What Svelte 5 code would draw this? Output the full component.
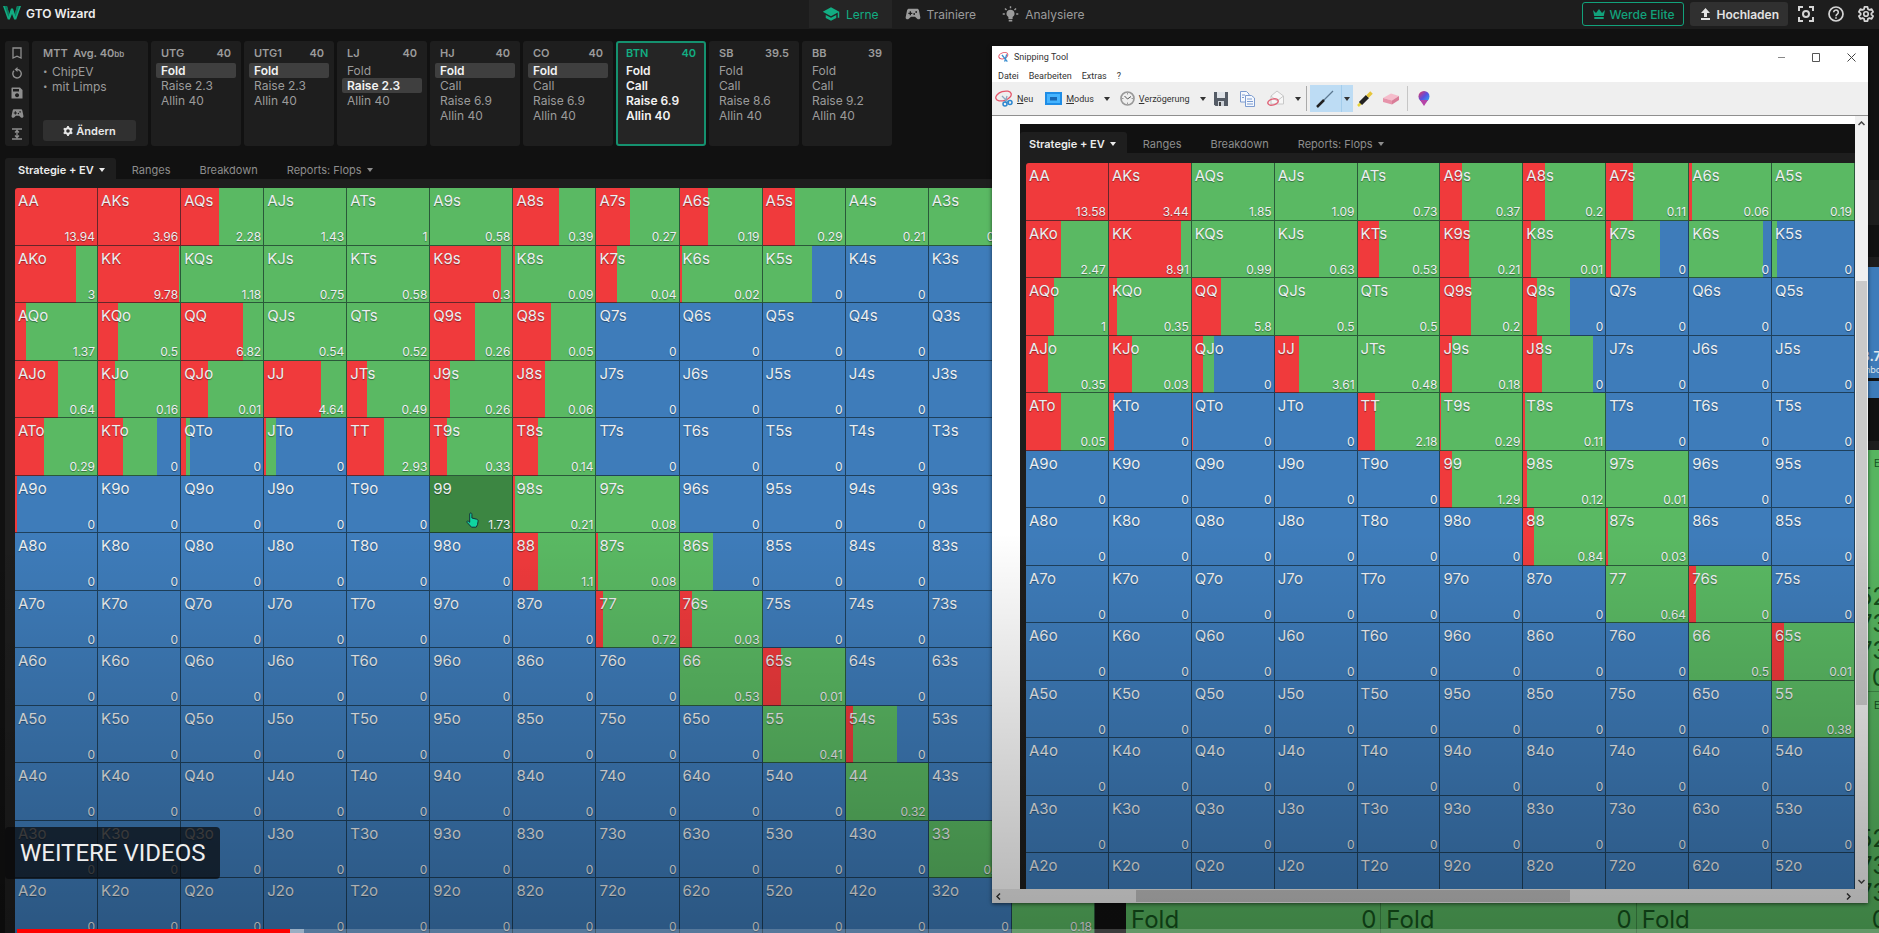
<script>
  const ranks = ['A', 'K', 'Q', 'J', 'T', '9', '8', '7', '6', '5', '4', '3', '2'];

  // hand: [red end %, green end %, EV]
  const mainHands = {
    AA: [100, 100, '13.94'], AKs: [100, 100, '3.96'], AQs: [46, 100, '2.28'], AJs: [0, 100, '1.43'], ATs: [0, 100, '1'],
    A9s: [0, 100, '0.58'], A8s: [55, 100, '0.39'], A7s: [41, 100, '0.27'], A6s: [34, 100, '0.19'], A5s: [39, 100, '0.29'],
    A4s: [0, 100, '0.21'], A3s: [0, 100, '0.18'], A2s: [0, 100, '0.17'],
    AKo: [74, 100, '3'], KK: [98, 100, '9.78'], KQs: [0, 100, '1.18'], KJs: [0, 100, '0.75'], KTs: [0, 100, '0.58'],
    K9s: [86, 100, '0.3'], K8s: [3, 100, '0.09'], K7s: [25, 100, '0.04'], K6s: [3, 100, '0.02'], K5s: [0, 59, '0'],
    AQo: [13, 100, '1.37'], KQo: [24, 100, '0.5'], QQ: [75, 100, '6.82'], QJs: [0, 100, '0.54'], QTs: [0, 100, '0.52'],
    Q9s: [54, 100, '0.26'], Q8s: [46, 100, '0.05'],
    AJo: [52, 100, '0.64'], KJo: [21, 100, '0.16'], QJo: [32, 100, '0.01'], JJ: [69, 100, '4.64'], JTs: [24, 100, '0.49'],
    J9s: [24, 100, '0.26'], J8s: [39, 100, '0.06'],
    ATo: [35, 100, '0.29'], KTo: [30, 71, '0'], QTo: [6, 11, '0'], JTo: [2, 14, '0'], TT: [44, 100, '2.93'],
    T9s: [20, 100, '0.33'], T8s: [30, 100, '0.14'],
    A9o: [3, 3, '0'], '99': [0, 100, '1.73'], '98s': [2, 100, '0.21'], '97s': [0, 100, '0.08'],
    '88': [30, 100, '1.1'], '87s': [2, 100, '0.08'], '86s': [0, 40, '0'],
    '77': [8, 100, '0.72'], '76s': [14, 100, '0.03'],
    '66': [0, 100, '0.53'], '65s': [22, 100, '0.01'],
    '55': [0, 100, '0.41'], '54s': [8, 61, '0'],
    '44': [0, 100, '0.32'], '33': [0, 100, '0.25'], '22': [0, 100, '0.18']
  };

  const snipHands = {
    AA: [100, 100, '13.58'], AKs: [99, 100, '3.44'], AQs: [0, 100, '1.85'], AJs: [0, 100, '1.09'], ATs: [0, 100, '0.73'],
    A9s: [27, 100, '0.37'], A8s: [27, 100, '0.2'], A7s: [33, 100, '0.11'], A6s: [4, 100, '0.06'], A5s: [0, 100, '0.19'],
    AKo: [42, 100, '2.47'], KK: [87, 100, '8.91'], KQs: [0, 100, '0.99'], KJs: [0, 100, '0.63'], KTs: [26, 100, '0.53'],
    K9s: [35, 100, '0.21'], K8s: [10, 100, '0.01'], K7s: [6, 65, '0'], K6s: [0, 89, '0'], K5s: [0, 6, '0'],
    AQo: [34, 100, '1'], KQo: [10, 100, '0.35'], QQ: [35, 100, '5.8'], QJs: [0, 100, '0.5'], QTs: [0, 100, '0.5'],
    Q9s: [37, 100, '0.2'], Q8s: [17, 57, '0'],
    AJo: [26, 100, '0.35'], KJo: [28, 100, '0.03'], QJo: [13, 26, '0'], JJ: [29, 100, '3.61'], JTs: [0, 100, '0.48'],
    J9s: [14, 100, '0.18'], J8s: [23, 84, '0'],
    ATo: [42, 100, '0.05'], KTo: [6, 6, '0'], QTo: [1, 1, '0'], TT: [21, 100, '2.18'], T9s: [1, 100, '0.29'], T8s: [2, 100, '0.11'],
    '99': [15, 100, '1.29'], '98s': [5, 100, '0.12'], '97s': [0, 100, '0.01'],
    '88': [13, 100, '0.84'], '87s': [3, 100, '0.03'],
    '77': [0, 100, '0.64'], '76s': [8, 100, '0'],
    '66': [0, 100, '0.5'], '65s': [15, 100, '0.01'],
    '55': [0, 100, '0.38']
  };

  function hand(i, j) {
    if (i === j) return ranks[i] + ranks[i];
    return j > i ? ranks[i] + ranks[j] + 's' : ranks[j] + ranks[i] + 'o';
  }

  function matrix(hands, cols) {
    return ranks.map((_, i) =>
      ranks.slice(0, cols).map((_, j) => {
        const name = hand(i, j);
        const [r, g, ev] = hands[name] ?? [0, 0, '0'];
        return { name, r, g, ev };
      })
    );
  }

  const mainRows = matrix(mainHands, 13);
  const snipRows = matrix(snipHands, 10);

  const seats = [
    { pos: 'UTG', stack: '40', actions: ['Fold', 'Raise 2.3', 'Allin 40'], picked: 0 },
    { pos: 'UTG1', stack: '40', actions: ['Fold', 'Raise 2.3', 'Allin 40'], picked: 0 },
    { pos: 'LJ', stack: '40', actions: ['Fold', 'Raise 2.3', 'Allin 40'], picked: 1 },
    { pos: 'HJ', stack: '40', actions: ['Fold', 'Call', 'Raise 6.9', 'Allin 40'], picked: 0 },
    { pos: 'CO', stack: '40', actions: ['Fold', 'Call', 'Raise 6.9', 'Allin 40'], picked: 0 },
    { pos: 'BTN', stack: '40', actions: ['Fold', 'Call', 'Raise 6.9', 'Allin 40'], picked: -1, active: true },
    { pos: 'SB', stack: '39.5', actions: ['Fold', 'Call', 'Raise 8.6', 'Allin 40'], picked: -1 },
    { pos: 'BB', stack: '39', actions: ['Fold', 'Call', 'Raise 9.2', 'Allin 40'], picked: -1 }
  ];

  const fill = (c) =>
    `linear-gradient(90deg, #f03a3c ${c.r}%, #5ab963 ${c.r}%, #5ab963 ${c.g}%, #3e7cba ${c.g}%)`;
</script>

{#snippet gamepad(size)}
  <svg width={size} height={size} viewBox="0 0 24 24" aria-hidden="true">
    <path fill="currentColor" fill-rule="evenodd" d="M6 4h12c1.500 0 2.600 1 2.900 2.400L23 16.800c.4 2.800-2.800 4.300-4.700 2.400L15 16H9l-3.300 3.200C3.800 21.100.6 19.600 1 16.800L3.100 6.400C3.400 5 4.500 4 6 4zm1 4v2H5v2h2v2h2v-2h2v-2H9V8zm8 4a1.300 1.300 0 1 0 0 .1zm3-3a1.300 1.300 0 1 0 0 .1z" />
  </svg>
{/snippet}

{#snippet tabs()}
  <nav class="tabs">
    <button class="tab on">Strategie + EV <i class="caret"></i></button>
    <button class="tab">Ranges</button>
    <button class="tab">Breakdown</button>
    <button class="tab">Reports: Flops <i class="caret"></i></button>
  </nav>
{/snippet}

{#snippet chart(rows, hover)}
  <table class="chart">
    <tbody>
      {#each rows as row}
        <tr>
          {#each row as c}
            <td class:hover={c.name === hover} style:background-image={c.name === hover ? null : fill(c)}>
              <span class="name">{c.name}</span>
              <span class="ev">{c.ev}</span>
              {#if c.name === hover}
                <svg class="pointer" width="13" height="16" viewBox="0 0 13 16" aria-hidden="true">
                  <path d="M4 1.200c1-.5 1.800 0 1.900 1V6l4.700 1.200c1.200.3 1.600 1 1.500 2l-.6 3.500-1.300 2.500H5.500L1 10.300c-.5-1 .6-1.700 1.500-1l1.200 1V2z" fill="#10d5a0" stroke="#17323a" />
                </svg>
              {/if}
            </td>
          {/each}
        </tr>
      {/each}
    </tbody>
  </table>
{/snippet}

<div class="app">
  <header class="top">
    <a class="brand" href="#home">
      <svg width="18" height="14" viewBox="0 0 18 14" aria-hidden="true">
        <path d="M0 0h4l2.200 8L8 2.500h2L11.800 8 14 0h4l-4.800 13.500h-2L9 8l-2.200 5.500h-2z" fill="#12ad82" />
        <path d="M4 0l2.200 8L5.500 11 1.500 0zM14 0l-2.200 8 .6 3L16.500 0z" fill="#0b7d60" />
      </svg>
      GTO Wizard
    </a>
    <nav class="modes">
      <a class="mode on" href="#lerne">
        <svg width="18" height="18" viewBox="0 0 24 24" aria-hidden="true"><path fill="currentColor" d="M5 13.200v4L12 21l7-3.800v-4L12 17zM12 3L1 9l11 6 9-4.900V17h2V9z" /></svg>
        Lerne
      </a>
      <a class="mode" href="#trainiere">{@render gamepad(16)} Trainiere</a>
      <a class="mode" href="#analysiere">
        <svg width="17" height="18" viewBox="0 0 24 24" aria-hidden="true">
          <path fill="currentColor" d="M12 6a5.500 5.500 0 0 0-3 10.200V19h6v-2.800A5.500 5.500 0 0 0 12 6zM9.500 20h5v2.500h-5z" />
          <path stroke="currentColor" stroke-width="2" d="M12 1v3M1 12h3M20 12h3M4.200 4.200l2.200 2.200M19.800 4.200l-2.200 2.200" />
        </svg>
        Analysiere
      </a>
    </nav>
    <div class="tools">
      <button class="elite">
        <svg width="12" height="10" viewBox="0 0 12 10" aria-hidden="true"><path fill="currentColor" d="M0 1l3 3 3-4 3 4 3-3-1.200 6H1.200zM1.300 8h9.400v2H1.300z" /></svg>
        Werde Elite
      </button>
      <button class="upload">
        <svg width="11" height="12" viewBox="0 0 11 12" aria-hidden="true"><path fill="currentColor" d="M5.500 0L10 5H7v4H4V5H1zM1 10h9v2H1z" /></svg>
        Hochladen
      </button>
      <button class="icon" aria-label="Vollbild">
        <svg width="16" height="16" viewBox="0 0 16 16" fill="none" stroke="currentColor" stroke-width="2" aria-hidden="true"><path d="M1 5V1h4M11 1h4v4M15 11v4h-4M5 15H1v-4" /><circle cx="8" cy="8" r="3" /></svg>
      </button>
      <button class="icon" aria-label="Hilfe">
        <svg width="16" height="16" viewBox="0 0 16 16" fill="none" stroke="currentColor" aria-hidden="true"><circle cx="8" cy="8" r="7" stroke-width="1.700" /><path stroke-width="1.600" d="M5.700 6.300a2.300 2.300 0 1 1 3.600 1.900C8.400 8.900 8 9.200 8 10.200M8 11.200v1.500" /></svg>
      </button>
      <button class="icon" aria-label="Einstellungen">
        <svg width="18" height="18" viewBox="0 0 24 24" aria-hidden="true"><path fill="none" stroke="currentColor" stroke-width="2.400" stroke-linejoin="round" d="M10 2.500h4l.6 3 2 1.100 2.900-1 2 3.500-2.300 2v1.800l2.300 2-2 3.500-2.900-1-2 1.100-.6 3h-4l-.6-3-2-1.100-2.900 1-2-3.500 2.300-2v-1.800l-2.300-2 2-3.500 2.900 1 2-1.100z" /><circle cx="12" cy="12" r="3" fill="none" stroke="currentColor" stroke-width="2.200" /></svg>
      </button>
    </div>
  </header>

  <section class="seats">
    <div class="rail">
      <button aria-label="Lesezeichen"><svg width="12" height="12" viewBox="0 0 12 12" fill="none" stroke="currentColor" stroke-width="1.300"><path d="M2 1h8v10L6 9.200 2 11z" /></svg></button>
      <button aria-label="Zurücksetzen"><svg width="12" height="12" viewBox="0 0 12 12" fill="none" stroke="currentColor" stroke-width="1.400"><path d="M3 3.800a4.200 4.200 0 1 0 3-1.300H5" /><path d="M6.500 0v5L3.500 2.500z" fill="currentColor" stroke="none" /></svg></button>
      <button aria-label="Speichern"><svg width="12" height="12" viewBox="0 0 12 12"><path fill="currentColor" fill-rule="evenodd" d="M1 .5h8L11.500 3v8.500H.5V1zM2 2v2.500h6V2zM6 6.200a2 2 0 1 0 .1 0z" /></svg></button>
      <button aria-label="Training">{@render gamepad(13)}</button>
      <button aria-label="Höhe"><svg width="12" height="12" viewBox="0 0 12 12" fill="none" stroke="currentColor" stroke-width="1.300"><path d="M1 1h10M1 11h10M6 3v6M4 4.500l2-2 2 2M4 7.500l2 2 2-2" /></svg></button>
    </div>
    <div class="game">
      <h2>MTT&nbsp; Avg. 40<small>bb</small></h2>
      <ul>
        <li>ChipEV</li>
        <li>mit Limps</li>
      </ul>
      <button class="change">
        <svg width="10" height="10" viewBox="0 0 10 10" aria-hidden="true"><circle cx="5" cy="5" r="2.800" fill="none" stroke="currentColor" stroke-width="2" /><path stroke="currentColor" stroke-width="1.800" d="M5 0v2M5 8v2M.7 2.500l1.700 1M7.600 6.500l1.700 1M.7 7.500l1.700-1M7.600 3.500l1.700-1" /></svg>
        Ändern
      </button>
    </div>
    {#each seats as s}
      <div class="seat" class:active={s.active}>
        <h2><span>{s.pos}</span><span>{s.stack}</span></h2>
        {#each s.actions as a, i}
          <button class="action" class:picked={i === s.picked}>{a}</button>
        {/each}
      </div>
    {/each}
  </section>

  <main class="work">
    <section class="strategy">
      {@render tabs()}
      <div class="frame">{@render chart(mainRows, '99')}</div>
    </section>
    <aside class="side">
      <div class="band dark"></div>
      <div class="stage"></div>
      <div class="band low"></div>
      <div class="share"><strong>3.7</strong><small>mbos</small></div>
      <div class="share thin"></div>
      <div class="gap"></div>
      <div class="combos">
        {#each [0, 1] as r}
          {#each [0, 1, 2] as c}
            <div class="combo">
              {#if c === 2}
                <small>EV</small>
                <span>52</span>
                <span>73</span>
                <span>73</span>
                {#if r === 0}<span>0</span>{/if}
              {/if}
              {#if r === 1}<p><span>Fold</span><span>0</span></p>{/if}
            </div>
          {/each}
        {/each}
      </div>
    </aside>
  </main>

  <section class="window">
    <div class="title">
      <svg width="12" height="12" viewBox="0 0 18 18" fill="none" aria-hidden="true"><ellipse cx="8" cy="7" rx="7" ry="4.500" stroke="#e4566a" stroke-width="1.500" transform="rotate(-20 8 7)" /><path d="M6 6l8 10M13 5l-3 11" stroke="#3c8fd0" stroke-width="2" /></svg>
      <span>Snipping Tool</span>
      <div class="sys">
        <button aria-label="Minimieren"><svg width="9" height="9" viewBox="0 0 9 9" stroke="#888" fill="none"><path d="M1 4.500h7" /></svg></button>
        <button aria-label="Maximieren"><svg width="9" height="9" viewBox="0 0 9 9" stroke="#555" fill="none"><path d="M.5 .5h7v8h-7z" /></svg></button>
        <button aria-label="Schließen"><svg width="9" height="9" viewBox="0 0 9 9" stroke="#444" fill="none"><path d="M.5 .5l8 8M8.500 .5l-8 8" /></svg></button>
      </div>
    </div>
    <nav class="menu">
      <button>Datei</button><button>Bearbeiten</button><button>Extras</button><button>?</button>
    </nav>
    <div class="bar">
      <button class="new">
        <svg width="18" height="17" viewBox="0 0 18 17" fill="none" aria-hidden="true"><ellipse cx="8.500" cy="6" rx="8" ry="4.500" stroke="#e4566a" stroke-width="1.300" transform="rotate(-18 8.500 6)" /><path d="M7 6l7 7M12 6l-2 7" stroke="#8aa8c0" stroke-width="1.300" /><circle cx="10" cy="14" r="2" stroke="#2b86d0" stroke-width="1.500" /><circle cx="15" cy="12.500" r="2" stroke="#2b86d0" stroke-width="1.500" /></svg>
        <span><u>N</u>eu</span>
      </button>
      <button class="modus">
        <svg width="17" height="13" viewBox="0 0 17 13" aria-hidden="true"><path fill="#1f8de6" d="M0 0h17v13H0z" /><path fill="#45b4ff" d="M2 2h13v9H2z" /><path fill="#1767b4" d="M5 5h7v3.500H5z" /></svg>
        <span><u>M</u>odus</span>
        <i class="caret"></i>
      </button>
      <button class="delay">
        <svg width="15" height="15" viewBox="0 0 15 15" fill="none" aria-hidden="true"><circle cx="7.500" cy="7.500" r="6.500" stroke="#999" stroke-width="1.700" fill="#eee" /><path d="M4.500 5l3 3 3.500-2.500" stroke="#555" /><path d="M7.500 2v1.500M7.500 11.500V13M2 7.500h1.500M11.500 7.500H13" stroke="#999" /></svg>
        <span><u>V</u>erzögerung</span>
        <i class="caret"></i>
      </button>
      <button class="save" aria-label="Speichern"><svg width="14" height="14" viewBox="0 0 14 14"><path d="M0 0h14v14H1.500L0 12.500z" fill="#555c66" /><path d="M3 0h8v6H3z" fill="#dfe3e8" /><path d="M4 9h6v5H4z" fill="#cfd4da" /><path d="M5 10h2v4H5z" fill="#444" /></svg></button>
      <button class="copy" aria-label="Kopieren"><svg width="15" height="16" viewBox="0 0 15 16" fill="#f5f8fd" stroke="#7d9cd0"><path d="M.5 .5h6L9 3v8H.5z" /><path d="M5.500 4.500h6L14.500 7v8.500h-9z" /><path d="M7 8h5M7 10.500h6M7 13h6M2 4h3M2 6.500h2" /></svg></button>
      <button class="mail" aria-label="Senden"><svg width="18" height="17" viewBox="0 0 18 17" fill="none"><path d="M4 6l6-5 6.500 5v8H4z" fill="#f7f7f7" stroke="#c8c8c8" /><path d="M4 6l6 5 6.500-5" stroke="#c8c8c8" /><ellipse cx="6" cy="12" rx="5.300" ry="3" stroke="#e0667a" stroke-width="1.500" transform="rotate(-15 6 12)" /></svg><i class="caret"></i></button>
      <span class="rule"></span>
      <button class="pen" aria-label="Stift"><svg width="18" height="18" viewBox="0 0 18 18" fill="none"><path d="M7 11L17 1" stroke="#5c7890" stroke-width="1.200" /><path d="M1 17l7-7" stroke="#222" stroke-width="2.500" /></svg></button>
      <button class="pen-more" aria-label="Stiftoptionen"><i class="caret"></i></button>
      <button class="marker" aria-label="Textmarker"><svg width="16" height="16" viewBox="0 0 16 16" fill="none"><path d="M1 15l4-4" stroke="#e6d43a" stroke-width="2.500" /><path d="M3.500 12.500l7-7" stroke="#222" stroke-width="4.500" /><path d="M10.500 5.500l4-4" stroke="#e6c53a" stroke-width="3.500" /></svg></button>
      <button class="eraser" aria-label="Radierer"><svg width="18" height="12" viewBox="0 0 18 12"><path d="M1 5l8-4.500 8 2.500-7 4.500z" fill="#f5bccb" /><path d="M1 5l9 2.500v4L1 9z" fill="#e693aa" /><path d="M10 7.500L17 3v4l-7 4.500z" fill="#d97d98" /></svg></button>
      <span class="rule soft"></span>
      <button class="paint" aria-label="Paint 3D"><svg width="12" height="15" viewBox="0 0 12 15"><defs><linearGradient id="drop" x1="0" y1="0" x2="1" y2="1"><stop offset="0" stop-color="#f0355a" /><stop offset=".5" stop-color="#5a4fe0" /><stop offset="1" stop-color="#25b5f0" /></linearGradient></defs><circle cx="6" cy="5.500" r="5.500" fill="url(#drop)" /><path d="M2 9h8l-4 6z" fill="#b544a8" /></svg></button>
    </div>
    <div class="canvas">
      <div class="snip">
        {@render tabs()}
        <div class="frame">{@render chart(snipRows, '')}</div>
      </div>
      <div class="vscroll">
        <svg width="7" height="5" viewBox="0 0 7 5" fill="none" stroke="#444" stroke-width="1.500"><path d="M.5 4l3-3 3 3" /></svg>
        <div class="vthumb"></div>
        <svg width="7" height="5" viewBox="0 0 7 5" fill="none" stroke="#444" stroke-width="1.500"><path d="M.5 1l3 3 3-3" /></svg>
      </div>
    </div>
    <div class="hscroll">
      <svg width="5" height="7" viewBox="0 0 5 7" fill="none" stroke="#333" stroke-width="1.500"><path d="M4 .5l-3 3 3 3" /></svg>
      <div class="hthumb"></div>
      <svg width="5" height="7" viewBox="0 0 5 7" fill="none" stroke="#333" stroke-width="1.500"><path d="M1 .5l3 3-3 3" /></svg>
    </div>
  </section>

  <div class="shade"></div>
  <button class="more">WEITERE VIDEOS</button>
  <div class="progress"><div class="played"></div><div class="loaded"></div></div>
</div>

<style>
  :global(body) {
    margin: 0;
    background: #111;
  }
  .app {
    position: relative;
    height: 100vh;
    overflow: hidden;
    display: flex;
    flex-direction: column;
    background: #111;
    color: #9b9b9b;
    font-family: Inter, sans-serif;
    font-size: 12px;
  }
  button {
    font: inherit;
    color: inherit;
    background: none;
    border: 0;
    padding: 0;
    margin: 0;
  }
  svg {
    flex: none;
    display: block;
  }
  h2, p, ul {
    margin: 0;
    padding: 0;
  }
  .caret {
    flex: none;
    border: 3px solid transparent;
    border-top: 4px solid currentColor;
    border-bottom: 0;
  }

  .top {
    flex: none;
    box-sizing: border-box;
    height: 29px;
    padding-bottom: 1px;
    background: #1d1d1d;
    display: grid;
    grid-template-columns: 809px 1fr auto;
  }
  .brand {
    display: flex;
    align-items: center;
    gap: 5px;
    padding: 0 0 2px 3px;
    color: #eee;
    font-weight: 600;
    text-decoration: none;
  }
  .modes {
    display: flex;
  }
  .mode {
    display: flex;
    align-items: center;
    gap: 6px;
    padding: 0 13px;
    color: #9b9b9b;
    text-decoration: none;
  }
  .mode.on {
    color: #12ad82;
    background: #252525;
  }
  .tools {
    display: flex;
    align-items: center;
    gap: 6px;
    padding-right: 4px;
  }
  .elite, .upload {
    box-sizing: border-box;
    height: 24px;
    display: flex;
    align-items: center;
    gap: 5px;
    border-radius: 3px;
    padding: 0 9px 0 10px;
    font-weight: 500;
  }
  .elite {
    color: #12a27b;
    border: 1px solid #12a27b;
  }
  .upload {
    color: #e2e2e2;
    background: #303030;
    font-weight: 600;
    margin-right: 3px;
  }
  .icon {
    width: 18px;
    margin-right: 6px;
    display: grid;
    place-items: center;
    color: #d5d5d5;
  }
  .icon:last-child {
    margin-right: 0;
  }

  .seats {
    flex: none;
    display: flex;
    gap: 3px;
    height: 105px;
    padding: 12px 5px;
  }
  .rail, .game, .seat {
    box-sizing: border-box;
    background: #1e1e1e;
    border-radius: 3px;
  }
  .rail {
    width: 24px;
    display: flex;
    flex-direction: column;
    align-items: center;
    justify-content: space-between;
    padding: 6px 0;
    color: #8f8f8f;
  }
  .game {
    width: 116px;
    padding: 5px 12px 5px 11px;
    display: flex;
    flex-direction: column;
  }
  h2 {
    font-size: 11px;
    line-height: 15px;
    font-weight: 600;
    margin-bottom: 2px;
  }
  h2 small {
    font-size: 8px;
  }
  .game ul {
    list-style: none;
  }
  .game li {
    height: 15px;
    line-height: 15px;
    display: flex;
  }
  .game li::before {
    content: "•";
    font-size: 8px;
    width: 9px;
  }
  .change {
    margin-top: auto;
    height: 21px;
    border-radius: 3px;
    background: #303030;
    color: #e8e8e8;
    font-size: 11px;
    font-weight: 600;
    display: flex;
    align-items: center;
    justify-content: center;
    gap: 3px;
  }
  .seat {
    width: 90px;
    padding: 5px;
    border: 0 solid #15916f;
    display: flex;
    flex-direction: column;
  }
  .seat h2 {
    display: flex;
    justify-content: space-between;
    padding: 0 5px;
  }
  .action {
    display: block;
    text-align: left;
    padding: 0 5px;
    line-height: 15px;
    border-radius: 2px;
  }
  .action.picked {
    background: #3f3f3f;
    color: #f2f2f2;
    font-weight: 600;
  }
  .seat.active {
    background: #252525;
    border-width: 2px;
    padding: 3px;
    color: #f2f2f2;
    font-weight: 600;
  }
  .seat.active h2 {
    color: #12ad82;
  }

  .work {
    flex: 1;
    min-height: 0;
    display: flex;
  }
  .strategy {
    flex: none;
    width: 1090px;
    margin-left: 5px;
  }
  .tabs {
    display: flex;
    height: 21px;
  }
  .tab {
    display: flex;
    align-items: center;
    gap: 5px;
    padding: 2px 13px 0;
    margin-right: 3px;
    font-size: 11px;
    color: #8d8d8d;
  }
  .tab.on {
    color: #ececec;
    background: #1e1e1e;
    border-radius: 3px 3px 0 0;
    font-weight: 600;
    padding-right: 11px;
  }
  .frame {
    background: #1e1e1e;
    padding: 9px 0 0 10px;
  }
  .chart {
    width: 100%;
    height: 748px;
    table-layout: fixed;
    border-collapse: collapse;
    border-radius: 3px 0 0 0;
    overflow: hidden;
  }
  td {
    position: relative;
    padding: 4px 3px 0;
    vertical-align: top;
    box-shadow: inset -1px -1px 0 rgba(10, 25, 30, 0.6);
    color: #eceff1;
    text-shadow: 0 1px 1px rgba(0, 0, 0, 0.4);
  }
  td.hover {
    background: #3c8642;
  }
  .name, .ev {
    display: block;
  }
  .name {
    font-size: 15px;
    line-height: 18px;
  }
  .ev {
    margin-top: 19px;
    line-height: 16px;
    text-align: right;
  }
  .pointer {
    position: absolute;
    left: 36px;
    top: 36px;
  }

  .side {
    flex: 1;
    min-width: 0;
    margin-left: 31px;
    overflow: hidden;
    padding-top: 22px;
  }
  .band, .stage, .share, .gap {
    box-sizing: border-box;
  }
  .band.dark {
    height: 45px;
    background: #1d1d1d;
  }
  .stage {
    height: 32px;
  }
  .band.low {
    height: 10px;
    background: #1d1d1d;
  }
  .share {
    height: 111px;
    background: #3e7cba;
    color: #dfe6ec;
    text-align: right;
    padding-top: 80px;
    margin-right: -2px;
    font-size: 13px;
    line-height: 18px;
  }
  .share strong, .share small {
    display: block;
  }
  .share small {
    font-size: 9px;
    line-height: 9px;
    margin-right: -5px;
  }
  .share.thin {
    height: 17px;
    padding: 0;
    margin-top: 3px;
  }
  .gap {
    height: 52px;
    border-bottom: 9px solid #1d1d1d;
  }
  .combos {
    display: grid;
    grid-template-columns: repeat(3, 1fr);
    margin-right: -13px;
  }
  .combo {
    position: relative;
    box-sizing: border-box;
    height: 242px;
    background: #57b560;
    border-right: 1px solid #3f8a47;
    border-bottom: 1px solid #3f8a47;
    padding: 6px 4px 0 5px;
    color: #14521c;
    font-size: 24px;
    line-height: 27px;
    text-align: right;
    display: flex;
    flex-direction: column;
    justify-content: flex-end;
  }
  .combo small {
    font-size: 10px;
    line-height: 14px;
    margin-bottom: auto;
  }
  .combo p {
    display: flex;
    justify-content: space-between;
  }

  .window {
    position: absolute;
    left: 992px;
    right: 11px;
    top: 46px;
    bottom: 30px;
    display: flex;
    flex-direction: column;
    background: #fff;
    box-shadow: 0 1px 4px rgba(0, 0, 0, 0.6);
    color: #333;
    font-family: Roboto, sans-serif;
    font-size: 9px;
  }
  .title {
    height: 22px;
    display: flex;
    align-items: center;
    gap: 4px;
    padding: 0 12px 0 6px;
  }
  .sys {
    margin-left: auto;
    display: flex;
    gap: 26px;
  }
  .menu {
    height: 14px;
    display: flex;
    gap: 10px;
    padding-left: 6px;
    line-height: 16px;
  }
  .bar {
    height: 33px;
    display: flex;
    align-items: center;
    background: #efefef;
    border-bottom: 1px solid #8f8f8f;
    padding-left: 3px;
  }
  .bar button {
    display: flex;
    align-items: center;
    gap: 4px;
    white-space: nowrap;
  }
  .bar .caret {
    color: #333;
    margin-left: 6px;
  }
  .bar .modus {
    margin-left: 12px;
  }
  .bar .delay {
    margin-left: 10px;
  }
  .bar .save {
    margin-left: 8px;
  }
  .bar .copy, .bar .mail {
    margin-left: 12px;
  }
  .rule {
    width: 1px;
    height: 25px;
    margin: 0 3px 0 5px;
    background: #aaa;
  }
  .rule.soft {
    margin: 0 10px 0 7px;
    background: #c6c6c6;
  }
  .bar .pen, .bar .pen-more {
    height: 27px;
    background: #bddcf4;
    justify-content: center;
  }
  .bar .pen {
    width: 31px;
  }
  .bar .pen-more {
    width: 12px;
    border-left: 1px solid #a3cdec;
  }
  .bar .pen-more .caret {
    margin: 0;
  }
  .bar .marker {
    margin-left: 4px;
  }
  .bar .eraser {
    margin-left: 9px;
  }

  .canvas {
    flex: 1;
    min-height: 0;
    display: flex;
    padding-top: 8px;
  }
  .snip {
    flex: 1;
    min-width: 0;
    margin-left: 28px;
    overflow: hidden;
    background: #111;
    font-family: Inter, sans-serif;
    font-size: 12px;
  }
  .snip .tabs {
    padding-top: 8px;
  }
  .snip .frame {
    padding: 10px 0 0 6px;
  }
  .snip .tab.on {
    padding-left: 9px;
  }
  .vscroll {
    width: 13px;
    margin-top: -8px;
    display: flex;
    flex-direction: column;
    align-items: center;
    justify-content: space-between;
    padding: 5px 0;
    box-sizing: border-box;
    background: #f0f0f0;
  }
  .vthumb {
    width: 11px;
    height: 424px;
    margin-bottom: 20px;
    background: #cacaca;
  }
  .hscroll {
    height: 14px;
    display: flex;
    align-items: center;
    padding: 0 17px 0 4px;
    background: #ececec;
  }
  .hthumb {
    width: 434px;
    height: 12px;
    margin: 0 auto 0 135px;
    background: #c2c2c2;
  }

  .shade {
    position: absolute;
    inset: auto 0 0 0;
    height: 400px;
    background: linear-gradient(transparent, rgba(0, 0, 0, 0.3));
    pointer-events: none;
  }
  .more {
    position: absolute;
    left: 5px;
    bottom: 54px;
    height: 52px;
    padding: 0 15px;
    border-radius: 4px;
    background: rgba(8, 8, 10, 0.72);
    color: #eee;
    font-family: Roboto, sans-serif;
    font-size: 24px;
  }
  .progress {
    position: absolute;
    inset: auto 0 0 17px;
    height: 4px;
    display: flex;
    background: rgba(255, 255, 255, 0.2);
  }
  .played {
    width: 273px;
    background: #f00;
  }
  .loaded {
    width: 14px;
    background: rgba(255, 255, 255, 0.4);
  }
</style>
